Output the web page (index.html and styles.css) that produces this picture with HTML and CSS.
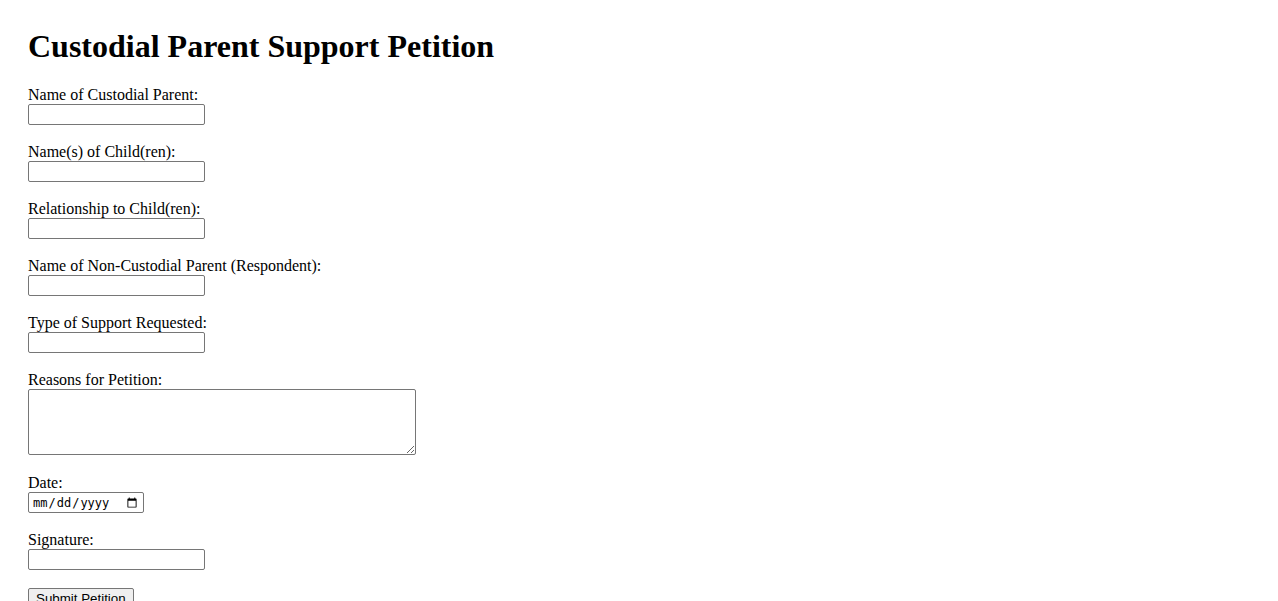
FILE: index.html
```html
<!DOCTYPE html>
<html lang="en">
<head>
    <meta charset="UTF-8">
    <meta name="viewport" content="width=device-width, initial-scale=1.0">
    <title>Custodial Parent Support Petition</title>
    <link rel="stylesheet" href="styles.css">
</head>
<body>
    <h1>Custodial Parent Support Petition</h1>

    <!-- Petition Form -->
    <form class="petition-form">
        <div class="field">
            <label for="parentName">Name of Custodial Parent:</label>
            <input type="text" id="parentName" name="parentName">
        </div>
        <div class="field">
            <label for="childNames">Name(s) of Child(ren):</label>
            <input type="text" id="childNames" name="childNames">
        </div>
        <div class="field">
            <label for="relationship">Relationship to Child(ren):</label>
            <input type="text" id="relationship" name="relationship">
        </div>
        <div class="field">
            <label for="respondent">Name of Non-Custodial Parent (Respondent):</label>
            <input type="text" id="respondent" name="respondent">
        </div>
        <div class="field">
            <label for="supportType">Type of Support Requested:</label>
            <input type="text" id="supportType" name="supportType">
        </div>
        <div class="field field-wide">
            <label for="reasons">Reasons for Petition:</label>
            <textarea id="reasons" name="reasons"></textarea>
        </div>
        <div class="field">
            <label for="date">Date:</label>
            <input type="date" id="date" name="date" class="date-input">
        </div>
        <div class="field">
            <label for="signature">Signature:</label>
            <input type="text" id="signature" name="signature">
        </div>
        <button type="submit" class="submit-btn">Submit Petition</button>
    </form>
</body>
</html>
```

FILE: styles.css
```css
/* Page */
body {
    margin: 0;
    padding: 28px;
    font-family: 'Liberation Serif', 'Times New Roman', serif;
    font-size: 16px;
    color: #000;
    background: #fff;
}

/* Heading */
h1 {
    margin: 0 0 21px;
    font-size: 32px;
    line-height: 37px;
    font-weight: bold;
}

/* Form layout */
.petition-form {
    display: flex;
    flex-direction: column;
    align-items: flex-start;
}

.field {
    display: flex;
    flex-direction: column;
    align-items: flex-start;
    margin-bottom: 18px;
}

.field-wide {
    margin-bottom: 19px;
}

.field label {
    line-height: 18px;
}

/* Inputs */
.field input,
.field textarea {
    box-sizing: border-box;
    margin: 0;
    width: 177px;
    height: 21px;
    padding: 1px 2px;
    border: 1px solid #767676;
    border-radius: 2px;
    background: #fff;
    font-family: 'Liberation Sans', Arial, sans-serif;
    font-size: 13.33px;
}

.field textarea {
    width: 388px;
    height: 66px;
    resize: vertical;
}

.field .date-input {
    width: 116px;
    font-family: 'DejaVu Sans Mono', monospace;
    font-size: 12px;
    padding: 1px 3px;
}

/* Submit button */
.submit-btn {
    box-sizing: border-box;
    margin: 0;
    height: 21px;
    padding: 1px 7px;
    border: 1px solid #767676;
    border-radius: 2px;
    background: #efefef;
    font-family: 'Liberation Sans', Arial, sans-serif;
    font-size: 13.33px;
    color: #000;
}
```
